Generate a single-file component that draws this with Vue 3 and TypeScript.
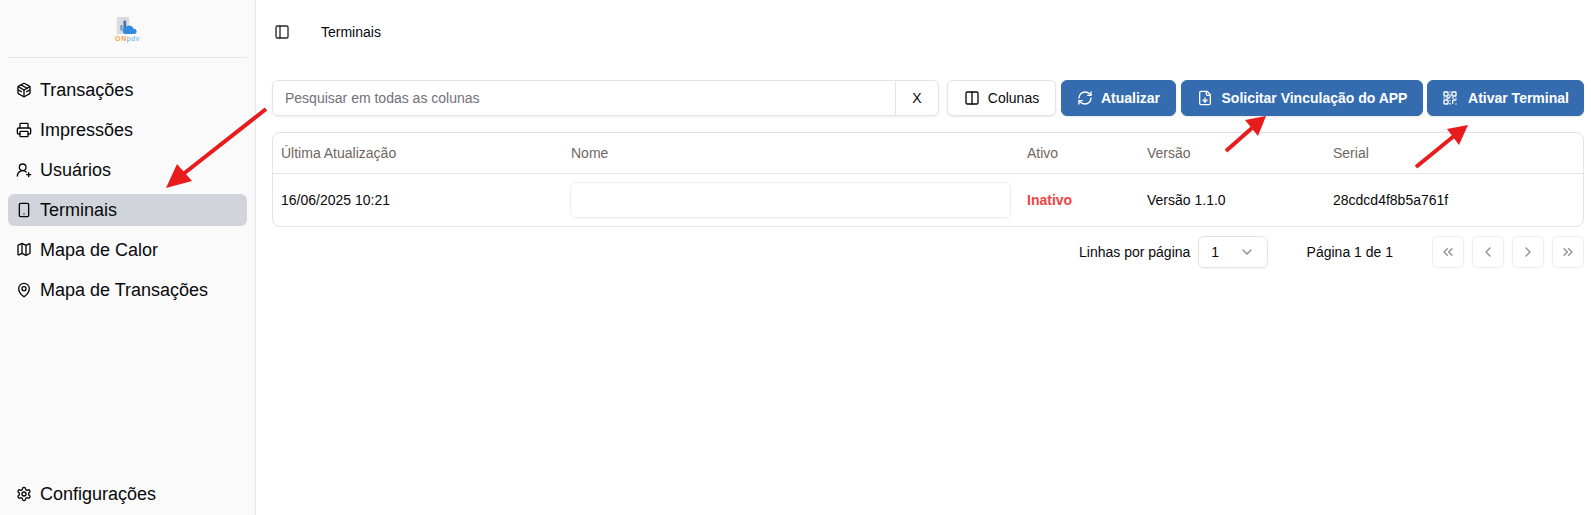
<script setup lang="ts">
const columns = ['Última Atualização', 'Nome', 'Ativo', 'Versão', 'Serial']
</script>

<template>
  <div class="page">
    <aside class="sidebar">
      <div class="logo">
        <div class="logo-mark">
          <svg width="28" height="20" viewBox="0 0 28 20">
            <rect x="2" y="0" width="14" height="19" fill="#d9dbdf" />
            <rect x="6" y="9" width="2.5" height="6" fill="#6d9dc8" />
            <rect x="9.5" y="4" width="3" height="11" fill="#3f78ad" />
            <path d="M11 19a3.5 3.5 0 0 1 .6-6.8 5 5 0 0 1 9.2.8 3 3 0 0 1 .7 6z" fill="#2f8be0" />
          </svg>
        </div>
        <div class="logo-text"><span class="on">ON</span><span class="pdv">pdv</span></div>
      </div>
      <nav class="nav">
        <a class="item">
          <svg class="ic" viewBox="0 0 24 24"><path d="M7.5 4.27 16.5 9.4" /><path d="M21 8a2 2 0 0 0-1-1.73l-7-4a2 2 0 0 0-2 0l-7 4A2 2 0 0 0 3 8v8a2 2 0 0 0 1 1.73l7 4a2 2 0 0 0 2 0l7-4A2 2 0 0 0 21 16Z" /><path d="m3.3 7 8.7 5 8.7-5" /><path d="M12 22V12" /><path d="M3.5 12 8 14.5M20.5 12 16 14.5" /></svg>
          <span>Transações</span>
        </a>
        <a class="item">
          <svg class="ic" viewBox="0 0 24 24"><path d="M6 18H4a2 2 0 0 1-2-2v-5a2 2 0 0 1 2-2h16a2 2 0 0 1 2 2v5a2 2 0 0 1-2 2h-2" /><path d="M6 9V3a1 1 0 0 1 1-1h10a1 1 0 0 1 1 1v6" /><rect x="6" y="14" width="12" height="8" rx="1" /></svg>
          <span>Impressões</span>
        </a>
        <a class="item">
          <svg class="ic" viewBox="0 0 24 24"><path d="M2 21a8 8 0 0 1 13.3-6" /><circle cx="10" cy="8" r="5" /><path d="M19 16v6M22 19h-6" /></svg>
          <span>Usuários</span>
        </a>
        <a class="item active">
          <svg class="ic" viewBox="0 0 24 24"><rect x="5" y="2" width="14" height="20" rx="2" /><path d="M12 18h.01" /></svg>
          <span>Terminais</span>
        </a>
        <a class="item">
          <svg class="ic" viewBox="0 0 24 24"><path d="M14.1 4.55a2 2 0 0 0 1.8 0l3.65-1.83A1 1 0 0 1 21 3.62v12.76a1 1 0 0 1-.55.9l-4.55 2.27a2 2 0 0 1-1.8 0l-4.2-2.1a2 2 0 0 0-1.8 0l-3.65 1.83A1 1 0 0 1 3 18.38V5.62a1 1 0 0 1 .55-.9L8.1 2.45a2 2 0 0 1 1.8 0z" /><path d="M15 5v14.5M9 2.5V17" /></svg>
          <span>Mapa de Calor</span>
        </a>
        <a class="item">
          <svg class="ic" viewBox="0 0 24 24"><path d="M20 10c0 5-5.500 10.200-7.400 11.800a1 1 0 0 1-1.200 0C9.500 20.200 4 15 4 10a8 8 0 0 1 16 0" /><circle cx="12" cy="10" r="3" /></svg>
          <span>Mapa de Transações</span>
        </a>
      </nav>
      <a class="item config">
        <svg class="ic" viewBox="0 0 24 24"><path d="M12.22 2h-.44a2 2 0 0 0-2 2v.18a2 2 0 0 1-1 1.730l-.43.250a2 2 0 0 1-2 0l-.15-.080a2 2 0 0 0-2.730.730l-.22.380a2 2 0 0 0 .730 2.730l.15.100a2 2 0 0 1 1 1.720v.510a2 2 0 0 1-1 1.740l-.15.090a2 2 0 0 0-.730 2.730l.22.380a2 2 0 0 0 2.730.730l.15-.080a2 2 0 0 1 2 0l.43.250a2 2 0 0 1 1 1.730V20a2 2 0 0 0 2 2h.44a2 2 0 0 0 2-2v-.18a2 2 0 0 1 1-1.730l.43-.250a2 2 0 0 1 2 0l.15.080a2 2 0 0 0 2.730-.730l.22-.390a2 2 0 0 0-.730-2.730l-.15-.080a2 2 0 0 1-1-1.740v-.500a2 2 0 0 1 1-1.740l.15-.090a2 2 0 0 0 .730-2.730l-.22-.380a2 2 0 0 0-2.730-.730l-.15.080a2 2 0 0 1-2 0l-.43-.250a2 2 0 0 1-1-1.730V4a2 2 0 0 0-2-2z" /><circle cx="12" cy="12" r="3" /></svg>
        <span>Configurações</span>
      </a>
    </aside>

    <main class="main">
      <header class="topbar">
        <svg class="ic top-ic" viewBox="0 0 24 24"><rect x="3" y="3" width="18" height="18" rx="2" /><path d="M9 3v18" /></svg>
        <span class="crumb">Terminais</span>
      </header>

      <div class="toolbar">
        <div class="search">
          <span class="placeholder">Pesquisar em todas as colunas</span>
          <span class="clear">X</span>
        </div>
        <button class="btn outline columns">
          <svg class="ic" viewBox="0 0 24 24"><rect x="3" y="3" width="18" height="18" rx="2" /><path d="M12 3v18" /></svg>
          Colunas
        </button>
        <button class="btn primary update">
          <svg class="ic" viewBox="0 0 24 24"><path d="M3 12a9 9 0 0 1 9-9 9.750 9.750 0 0 1 6.740 2.740L21 8" /><path d="M21 3v5h-5" /><path d="M21 12a9 9 0 0 1-9 9 9.750 9.750 0 0 1-6.740-2.740L3 16" /><path d="M8 16H3v5" /></svg>
          Atualizar
        </button>
        <button class="btn primary request">
          <svg class="ic" viewBox="0 0 24 24"><path d="M15 2H6a2 2 0 0 0-2 2v16a2 2 0 0 0 2 2h12a2 2 0 0 0 2-2V7Z" /><path d="M14 2v4a2 2 0 0 0 2 2h4" /><path d="M12 18v-6" /><path d="m9 15 3 3 3-3" /></svg>
          Solicitar Vinculação do APP
        </button>
        <button class="btn primary activate">
          <svg class="ic qr" viewBox="0 0 24 24"><rect x="3" y="3" width="6" height="6" rx="1" /><rect x="15" y="3" width="6" height="6" rx="1" /><rect x="3" y="15" width="6" height="6" rx="1" /><path d="M21 15h-3a2 2 0 0 0-2 2v3" /><path d="M21 21h.01M12 7v3a2 2 0 0 1-2 2H7M3 12h.01M12 3h.01M12 16v.01M16 12h1M21 12v.01M12 21v-1" /></svg>
          Ativar Terminal
        </button>
      </div>

      <div class="table-box">
        <table>
          <colgroup>
            <col class="c1" />
            <col class="c2" />
            <col class="c3" />
            <col class="c4" />
            <col />
          </colgroup>
          <thead>
            <tr><th v-for="c in columns" :key="c">{{ c }}</th></tr>
          </thead>
          <tbody>
            <tr>
              <td>16/06/2025 10:21</td>
              <td><div class="name-input"></div></td>
              <td class="inactive">Inativo</td>
              <td>Versão 1.1.0</td>
              <td>28cdcd4f8b5a761f</td>
            </tr>
          </tbody>
        </table>
      </div>

      <div class="pager">
        <span class="rows-label">Linhas por página</span>
        <div class="select">
          <span>1</span>
          <svg class="ic chev" viewBox="0 0 24 24"><path d="m6 9 6 6 6-6" /></svg>
        </div>
        <span class="page-label">Página 1 de 1</span>
        <div class="page-btns">
          <button class="pbtn"><svg class="ic" viewBox="0 0 24 24"><path d="m11 17-5-5 5-5M18 17l-5-5 5-5" /></svg></button>
          <button class="pbtn"><svg class="ic" viewBox="0 0 24 24"><path d="m15 18-6-6 6-6" /></svg></button>
          <button class="pbtn"><svg class="ic" viewBox="0 0 24 24"><path d="m9 18 6-6-6-6" /></svg></button>
          <button class="pbtn"><svg class="ic" viewBox="0 0 24 24"><path d="m6 17 5-5-5-5M13 17l5-5-5-5" /></svg></button>
        </div>
      </div>
    </main>

    <svg class="arrows" width="1591" height="515" viewBox="0 0 1591 515">
      <g fill="#e81c1c" stroke="#e81c1c">
        <line x1="266" y1="109" x2="182" y2="175" stroke-width="4" />
        <path d="M166 188 L177 164 L192 181 Z" stroke="none" />
        <line x1="1226" y1="151" x2="1252" y2="128" stroke-width="4" />
        <path d="M1266 116 L1245 120 L1258 136 Z" stroke="none" />
        <line x1="1416" y1="167" x2="1454" y2="136" stroke-width="4" />
        <path d="M1468 125 L1447 129 L1459 145 Z" stroke="none" />
      </g>
    </svg>
  </div>
</template>

<style>
html, body { margin: 0; background: #fff; }
</style>

<style scoped>
.page {
  position: relative;
  display: flex;
  width: 1591px;
  height: 515px;
  overflow: hidden;
  font-family: "Liberation Sans", Arial, sans-serif;
  color: #09090b;
  background: #fff;
}
.ic {
  width: 16px;
  height: 16px;
  flex: none;
  fill: none;
  stroke: currentColor;
  stroke-width: 2;
  stroke-linecap: round;
  stroke-linejoin: round;
}
.sidebar {
  width: 256px;
  box-sizing: border-box;
  flex: none;
  display: flex;
  flex-direction: column;
  background: #fafafa;
  border-right: 1px solid #e5e7eb;
  padding: 0 8px;
}
.logo {
  height: 58px;
  box-sizing: border-box;
  border-bottom: 1px solid #e4e4e7;
  display: flex;
  flex-direction: column;
  align-items: center;
  padding-top: 17px;
}
.logo-mark { height: 18px; line-height: 0; }
.logo-mark svg { width: 25px; height: 18px; }
.logo-text {
  font-size: 7px;
  line-height: 8px;
  letter-spacing: 0.6px;
  font-weight: 700;
}
.logo-text .on { color: #f5a04c; }
.logo-text .pdv { color: #5aa9e0; font-weight: 400; }
.nav {
  flex: 1;
  display: flex;
  flex-direction: column;
  gap: 8px;
  padding-top: 16px;
}
.item {
  height: 32px;
  display: flex;
  align-items: center;
  gap: 8px;
  padding: 0 8px;
  border-radius: 6px;
  font-size: 18px;
  color: #09090b;
  white-space: nowrap;
}
.item.active { background: #d1d5db; }
.config { margin-bottom: 5px; }
.main {
  flex: 1;
  min-width: 0;
  padding: 0 7px 0 16px;
  display: flex;
  flex-direction: column;
}
.topbar {
  height: 64px;
  display: flex;
  align-items: center;
  font-size: 14px;
}
.top-ic { color: #27272a; margin-left: 2px; }
.crumb { margin-left: 31px; }
.toolbar {
  display: flex;
  align-items: flex-start;
  margin-top: 16px;
  height: 36px;
}
.search {
  width: 667px;
  height: 36px;
  box-sizing: border-box;
  border: 1px solid #e4e4e7;
  border-radius: 6px;
  display: flex;
  align-items: center;
  font-size: 14px;
  box-shadow: 0 1px 2px rgba(0, 0, 0, 0.07);
}
.placeholder { flex: 1; padding-left: 12px; color: #71717a; }
.clear {
  width: 42px;
  height: 100%;
  line-height: 34px;
  text-align: center;
  border-left: 1px solid #e4e4e7;
  color: #09090b;
}
.btn {
  height: 36px;
  box-sizing: border-box;
  border-radius: 6px;
  display: flex;
  align-items: center;
  justify-content: center;
  gap: 8px;
  font-family: inherit;
  font-size: 14px;
  padding: 0;
  white-space: nowrap;
  box-shadow: 0 1px 2px rgba(0, 0, 0, 0.1);
}
.outline {
  background: #fff;
  border: 1px solid #e4e4e7;
  color: #09090b;
}
.primary {
  background: #346caf;
  border: 1px solid #346caf;
  color: #fff;
  font-weight: 700;
}
.columns { width: 109px; margin-left: 8px; }
.update { width: 115px; margin-left: 5px; }
.request { width: 242px; margin-left: 5px; gap: 9px; }
.activate { width: 157px; margin-left: 4px; }
.qr { margin-right: 2px; }
.table-box {
  margin-top: 16px;
  height: 95px;
  box-sizing: border-box;
  border: 1px solid #e4e4e7;
  border-radius: 8px;
  overflow: hidden;
}
table {
  width: 100%;
  border-collapse: collapse;
  table-layout: fixed;
  font-size: 14px;
}
.c1 { width: 290px; }
.c2 { width: 456px; }
.c3 { width: 120px; }
.c4 { width: 186px; }
th {
  height: 40px;
  padding: 0 8px;
  text-align: left;
  font-weight: 400;
  color: #71665f;
  border-bottom: 1px solid #e4e4e7;
  white-space: nowrap;
}
td { height: 52px; padding: 0 8px; white-space: nowrap; }
.inactive { color: #ef4444; font-weight: 700; }
.name-input {
  height: 36px;
  box-sizing: border-box;
  margin-left: -1px;
  border: 1px solid #eeeef0;
  border-radius: 6px;
  box-shadow: 0 1px 2px rgba(0, 0, 0, 0.04);
}
.pager {
  margin-top: 9px;
  display: flex;
  align-items: center;
  font-size: 14px;
  white-space: nowrap;
}
.rows-label { margin-left: 807px; }
.select {
  width: 70px;
  height: 32px;
  box-sizing: border-box;
  margin-left: 8px;
  border: 1px solid #e4e4e7;
  border-radius: 6px;
  box-shadow: 0 1px 2px rgba(0, 0, 0, 0.06);
  display: flex;
  align-items: center;
  justify-content: space-between;
  padding: 0 12px 0 12px;
}
.chev { color: #8a8a90; }
.page-label { margin-left: 39px; }
.page-btns { display: flex; gap: 8px; margin-left: 39px; }
.pbtn {
  width: 32px;
  height: 32px;
  padding: 0;
  background: #fff;
  border: 1px solid #eeeef0;
  border-radius: 6px;
  display: flex;
  align-items: center;
  justify-content: center;
  color: #909096;
  box-shadow: 0 1px 2px rgba(0, 0, 0, 0.04);
}
.arrows {
  position: absolute;
  left: 0;
  top: 0;
  pointer-events: none;
}
</style>
